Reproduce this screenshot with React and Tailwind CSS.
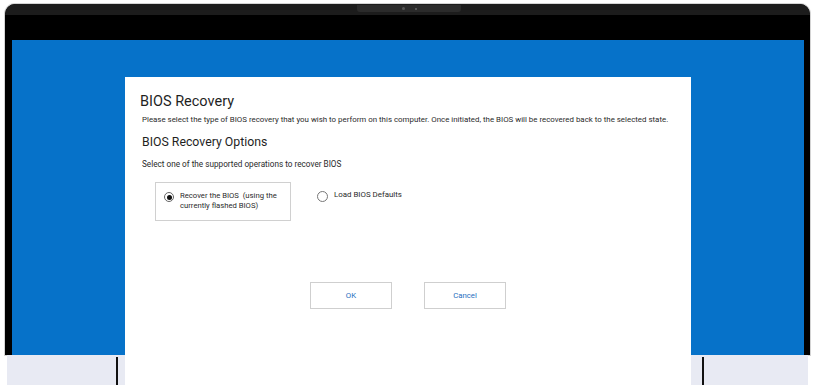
export default function App() {
  const font = { fontFamily: 'Roboto, "Liberation Sans", sans-serif' };
  return (
    <div className="relative w-[822px] h-[385px] bg-white overflow-hidden flex flex-col" style={font}>
      {/* laptop frame */}
      <div className="mt-[4px] ml-[5px] w-[805px] flex flex-col shadow-[0_0_0_1px_#d4d4d4]  rounded-t-[10px]">
        <div className="relative h-[36px] bg-black rounded-t-[10px] flex flex-col">
          <div className="h-[11px] bg-[#1c1c1c] rounded-t-[10px]" />
          <div className="absolute left-[352px] top-[1px] w-[104px] h-[7px] rounded-b-[3px] bg-[#2b2b2b] flex items-center justify-center gap-[10px]">
            <div className="w-[3px] h-[3px] rounded-full bg-[#555]" />
            <div className="w-[2px] h-[2px] rounded-full bg-[#666]" />
          </div>
        </div>
        <div className="h-[315px] flex">
          <div className="w-[7px] bg-black" />
          <div className="flex-1 bg-[#0672c9]" />
          <div className="w-[6px] bg-black" />
        </div>
      </div>
      {/* bottom strip */}
      <div className="flex-1 flex">
        <div className="ml-[7px] w-[118px] bg-[#e8eaf3] flex pt-[2px]">
          <div className="ml-[109px] w-[2px] bg-[#111]" />
        </div>
        <div className="w-[565px]" />
        <div className="w-[118px] bg-[#e8eaf3] flex pt-[2px]">
          <div className="ml-[12px] w-[2px] bg-[#111]" />
        </div>
      </div>

      {/* dialog */}
      <div className="absolute left-[125px] top-[77px] w-[566px] bottom-0 bg-white text-[#1f1f1f] flex flex-col">
        <div className="pl-[15px] pt-[15px] text-[14.5px] leading-[20px]">BIOS Recovery</div>
        <div className="pl-[17px] mt-[3px] text-[7.9px] leading-[10px] text-[#2a2a2a]">
          Please select the type of BIOS recovery that you wish to perform on this computer. Once initiated, the BIOS will be recovered back to the selected state.
        </div>
        <div className="pl-[17px] mt-[9px] text-[12.3px] leading-[16px]">BIOS Recovery Options</div>
        <div className="pl-[17px] mt-[9px] text-[8.2px] leading-[10px] text-[#2a2a2a]">
          Select one of the supported operations to recover BIOS
        </div>
        <div className="mt-[13px] ml-[30px] flex items-start gap-[26px]">
          <div className="w-[136px] h-[39px] border border-[#d0d0d0] flex items-start pl-[8px] pt-[8px] gap-[6px]">
            <div className="mt-[1px] w-[10px] h-[10px] rounded-full border border-[#666] flex items-center justify-center">
              <div className="w-[5px] h-[5px] rounded-full bg-[#111]" />
            </div>
            <div className="text-[7.7px] leading-[10px] text-[#2a2a2a]">
              Recover the BIOS&nbsp; (using the<br />currently flashed BIOS)
            </div>
          </div>
          <div className="flex items-start pt-[8px] gap-[6px]">
            <div className="mt-[1px] w-[11px] h-[11px] rounded-full border border-[#777]" />
            <div className="text-[7.9px] leading-[10px] text-[#2a2a2a]">Load BIOS Defaults</div>
          </div>
        </div>
        <div className="mt-[61px] ml-[185px] flex gap-[32px]">
          <div className="w-[82px] h-[27px] border border-[#cfcfcf] flex items-center justify-center text-[7.8px] text-[#1f6fc0]">OK</div>
          <div className="w-[82px] h-[27px] border border-[#cfcfcf] flex items-center justify-center text-[7.8px] text-[#1f6fc0]">Cancel</div>
        </div>
      </div>
    </div>
  );
}
